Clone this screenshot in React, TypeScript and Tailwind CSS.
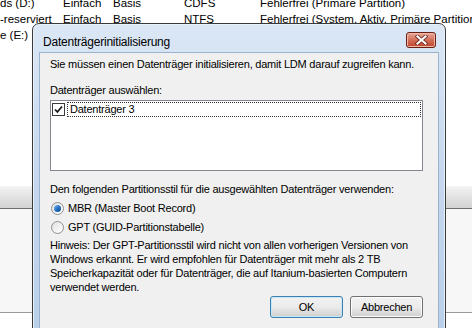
import React from "react";

function CloseGlyph() {
  return (
    <svg width="13" height="10" viewBox="0 0 13 10">
      <path d="M2.5 1.5 L10.5 8.5 M10.5 1.5 L2.5 8.5" stroke="#5a1a10" strokeWidth="3.6" strokeLinecap="square" />
      <path d="M2.5 1.5 L10.5 8.5 M10.5 1.5 L2.5 8.5" stroke="#ffffff" strokeWidth="2.2" strokeLinecap="square" />
    </svg>
  );
}

function Radio({ checked }: { checked?: boolean }) {
  return (
    <span className="w-[13px] h-[13px] rounded-full border border-[#8c8f94] bg-gradient-to-br from-[#e2e2e2] to-[#ffffff] flex items-center justify-center shrink-0">
      {checked && (
        <span className="w-[7px] h-[7px] rounded-full bg-gradient-to-br from-[#7ab8f0] via-[#2872c3] to-[#0d4a8f]" />
      )}
    </span>
  );
}

function Button({ label, isDefault }: { label: string; isDefault?: boolean }) {
  return (
    <button
      className={`w-[73px] h-[22px] rounded-[3px] border text-black bg-gradient-to-b from-[#f2f2f2] via-[#ebebeb] to-[#cfcfcf] ${
        isDefault ? "border-[#3c7fb1] shadow-[inset_0_0_0_1px_#c8e8f8]" : "border-[#707070] shadow-[inset_0_0_0_1px_#fcfcfc]"
      }`}
    >
      {label}
    </button>
  );
}

const rows = [
  { a: "ds (D:)", b: "Einfach", c: "Basis", d: "CDFS", e: "Fehlerfrei (Primäre Partition)" },
  { a: "-reserviert", b: "Einfach", c: "Basis", d: "NTFS", e: "Fehlerfrei (System, Aktiv, Primäre Partition)" },
  { a: "e (E:)", b: "Einfach", c: "Basis", d: "NTFS", e: "Fehlerfrei (Primäre Partition)" },
];

export default function App() {
  return (
    <div className="relative w-[472px] h-[328px] overflow-hidden bg-white text-[11px] tracking-[-0.22px] text-black font-['Liberation_Sans',Arial,sans-serif]">
      {/* Disk list behind the dialog */}
      <div className="-mt-[5px] text-[11.5px] tracking-normal">
        {rows.map((r, i) => (
          <div key={i} className="flex h-[16px] leading-[16px] whitespace-nowrap">
            <span className="w-[63px] shrink-0">{r.a}</span>
            <span className="w-[50px] shrink-0">{r.b}</span>
            <span className="w-[71px] shrink-0">{r.c}</span>
            <span className="w-[76px] shrink-0">{r.d}</span>
            <span className="shrink-0">{r.e}</span>
          </div>
        ))}
      </div>
      <div className="h-[143px]" />
      {/* splitter */}
      <div className="h-[22px] bg-gradient-to-b from-[#f4f4f4] via-[#e2e2e2] to-[#d2d2d2]" />
      <div className="h-[1px] bg-[#6d6d6d]" />
      <div className="h-[104px] bg-[#f7f7f7] border-b border-[#9a9a9a]" />

      {/* Dialog */}
      <div className="absolute left-[32px] top-[23px] w-[414px] h-[320px] rounded-t-[7px] border border-[#3a3a3a] bg-gradient-to-b from-[#dbe7f5] via-[#c4d7ee] to-[#b9cfe9] shadow-[inset_0_0_0_1px_#e8f0fa] px-[6px]">
        <div className="relative h-[28px] flex items-center pl-[4px] pt-[7px] text-[12px]">
          Datenträgerinitialisierung
          <div className="absolute right-[3px] top-[8px] w-[30px] h-[16px] rounded-[3px] border border-[#6b1d10] bg-gradient-to-b from-[#e9a99b] via-[#d16e58] to-[#c1432a] shadow-[inset_0_0_0_1px_#f0b8a8] flex items-center justify-center">
            <CloseGlyph />
          </div>
        </div>
        <div className="h-[300px] border border-[#9bb2cf] bg-[#f0f0f0] pl-[10px] pr-[15px] leading-[14px]">
          <div className="pt-[4px] whitespace-nowrap">
            Sie müssen einen Datenträger initialisieren, damit LDM darauf zugreifen kann.
          </div>
          <div className="mt-[12px]">Datenträger auswählen:</div>
          <div className="mt-[3px] h-[71px] border border-[#828790] bg-white p-[1px]">
            <div className="flex items-center h-[15px]">
              <span className="w-[13px] h-[13px] border border-[#3b3b3b] bg-white flex items-center justify-center shrink-0">
                <svg width="9" height="9" viewBox="0 0 9 9">
                  <path d="M1 4.5 L3.4 7 L8 1.5" stroke="#1a1a1a" strokeWidth="1.8" fill="none" />
                </svg>
              </span>
              <span className="ml-[2px] flex-1 h-[15px] border border-dotted border-[#333] pl-[2px] leading-[13px]">
                Datenträger 3
              </span>
            </div>
          </div>
          <div className="mt-[11px] whitespace-nowrap">
            Den folgenden Partitionsstil für die ausgewählten Datenträger verwenden:
          </div>
          <div className="mt-[5px] flex items-center gap-[4px] pl-[1px]">
            <Radio checked />
            <span>MBR (Master Boot Record)</span>
          </div>
          <div className="mt-[5px] flex items-center gap-[4px] pl-[1px]">
            <Radio />
            <span>GPT (GUID-Partitionstabelle)</span>
          </div>
          <div className="mt-[4px] whitespace-nowrap">
            <div>Hinweis: Der GPT-Partitionsstil wird nicht von allen vorherigen Versionen von</div>
            <div>Windows erkannt. Er wird empfohlen für Datenträger mit mehr als 2 TB</div>
            <div>Speicherkapazität oder für Datenträger, die auf Itanium-basierten Computern</div>
            <div>verwendet werden.</div>
          </div>
          <div className="mt-[2px] flex justify-end gap-[7px]">
            <Button label="OK" isDefault />
            <Button label="Abbrechen" />
          </div>
        </div>
      </div>
    </div>
  );
}
